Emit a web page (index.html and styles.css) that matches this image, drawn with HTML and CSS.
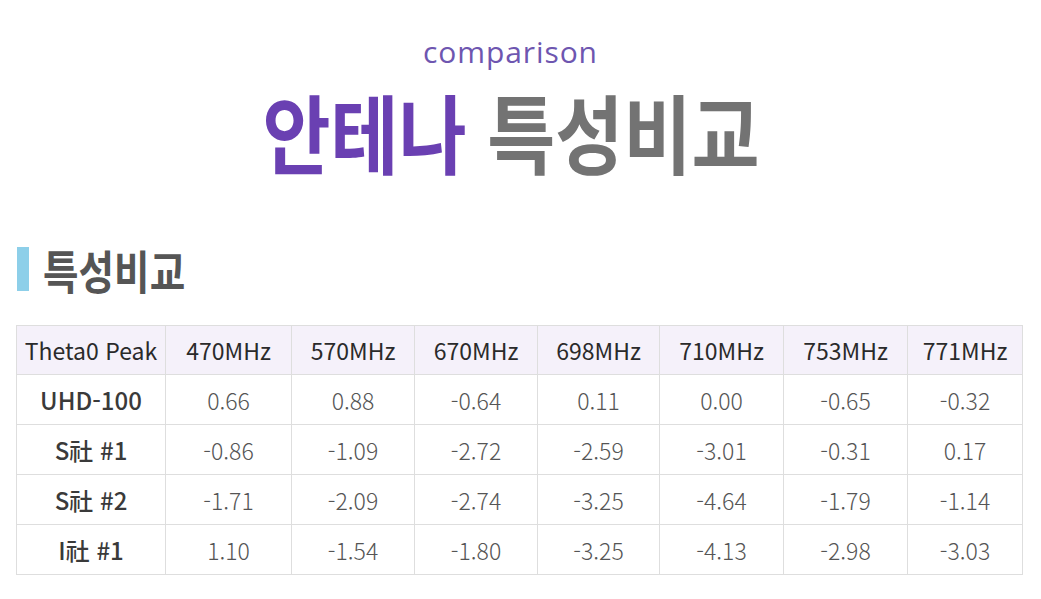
FILE: index.html
```html
<!DOCTYPE html>
<html lang="ko">
<head>
<meta charset="utf-8">
<title>안테나 특성비교</title>
<link rel="stylesheet" href="styles.css">
</head>
<body>
<header class="hero">
  <p class="hero-sub">comparison</p>
  <h1 class="hero-title"><span class="hero-accent">안테나</span> 특성비교</h1>
</header>
<section class="section">
  <h2 class="section-title"><span class="section-bar"></span><span class="section-text">특성비교</span></h2>
  <table class="spec">
    <colgroup>
      <col class="c0"><col class="c1"><col class="c2"><col class="c3"><col class="c4"><col class="c5"><col class="c6"><col class="c7">
    </colgroup>
    <thead>
      <tr><th>Theta0 Peak</th><th>470MHz</th><th>570MHz</th><th>670MHz</th><th>698MHz</th><th>710MHz</th><th>753MHz</th><th>771MHz</th></tr>
    </thead>
    <tbody>
      <tr><th>UHD-100</th><td>0.66</td><td>0.88</td><td>-0.64</td><td>0.11</td><td>0.00</td><td>-0.65</td><td>-0.32</td></tr>
      <tr><th>S社 #1</th><td>-0.86</td><td>-1.09</td><td>-2.72</td><td>-2.59</td><td>-3.01</td><td>-0.31</td><td>0.17</td></tr>
      <tr><th>S社 #2</th><td>-1.71</td><td>-2.09</td><td>-2.74</td><td>-3.25</td><td>-4.64</td><td>-1.79</td><td>-1.14</td></tr>
      <tr><th>I社 #1</th><td>1.10</td><td>-1.54</td><td>-1.80</td><td>-3.25</td><td>-4.13</td><td>-2.98</td><td>-3.03</td></tr>
    </tbody>
  </table>
</section>
</body>
</html>
```

FILE: styles.css
```css
html, body {
  margin: 0;
  padding: 0;
  background: #ffffff;
}

body {
  font-family: "Noto Sans CJK KR", "Noto Sans", sans-serif;
  color: #333;
}

.hero {
  display: flex;
  flex-direction: column;
  align-items: center;
  padding: 32px 20px 0 0;
}

.hero-sub {
  margin: 0;
  font-family: "Open Sans", "Noto Sans", sans-serif;
  font-size: 30px;
  line-height: 40px;
  letter-spacing: 0.9px;
  color: #6e56b0;
}

.hero-title {
  margin: 9px 0 0;
  font-size: 86px;
  line-height: 100px;
  font-weight: 700;
  color: #737373;
  transform: scaleX(0.86);
  white-space: nowrap;
}

.hero-accent {
  color: #6a40b2;
}

.section {
  padding: 63px 0 0 16px;
}

.section-title {
  display: flex;
  align-items: center;
  gap: 14px;
  margin: 0;
  height: 50px;
  padding-left: 1px;
}

.section-bar {
  width: 12px;
  height: 44px;
  background: #8dcfe9;
  flex: none;
}

.section-text {
  font-size: 46px;
  font-weight: 700;
  color: #555;
  line-height: 50px;
  transform: scaleX(0.84);
  transform-origin: left center;
  white-space: nowrap;
}

.spec {
  margin-top: 31px;
  width: 1006px;
  border-collapse: collapse;
  table-layout: fixed;
  border: 1px solid #dcdcdc;
}

.c0 { width: 149px; }
.c1 { width: 126px; }
.c2 { width: 123px; }
.c3 { width: 123px; }
.c4 { width: 122px; }
.c5 { width: 124px; }
.c6 { width: 124px; }
.c7 { width: 115px; }

.spec th,
.spec td {
  border: 1px solid #dedede;
  text-align: center;
  padding: 0;
  white-space: nowrap;
}

.spec thead th {
  height: 48px;
  background: #f5f1fa;
  font-size: 23px;
  font-weight: 400;
  color: #2a2a2a;
}

.spec tbody tr {
  height: 50px;
}

.spec tbody th {
  font-size: 24px;
  font-weight: 500;
  color: #3a3a3a;
}

.spec td {
  font-size: 23px;
  font-weight: 300;
  color: #555;
}
```
